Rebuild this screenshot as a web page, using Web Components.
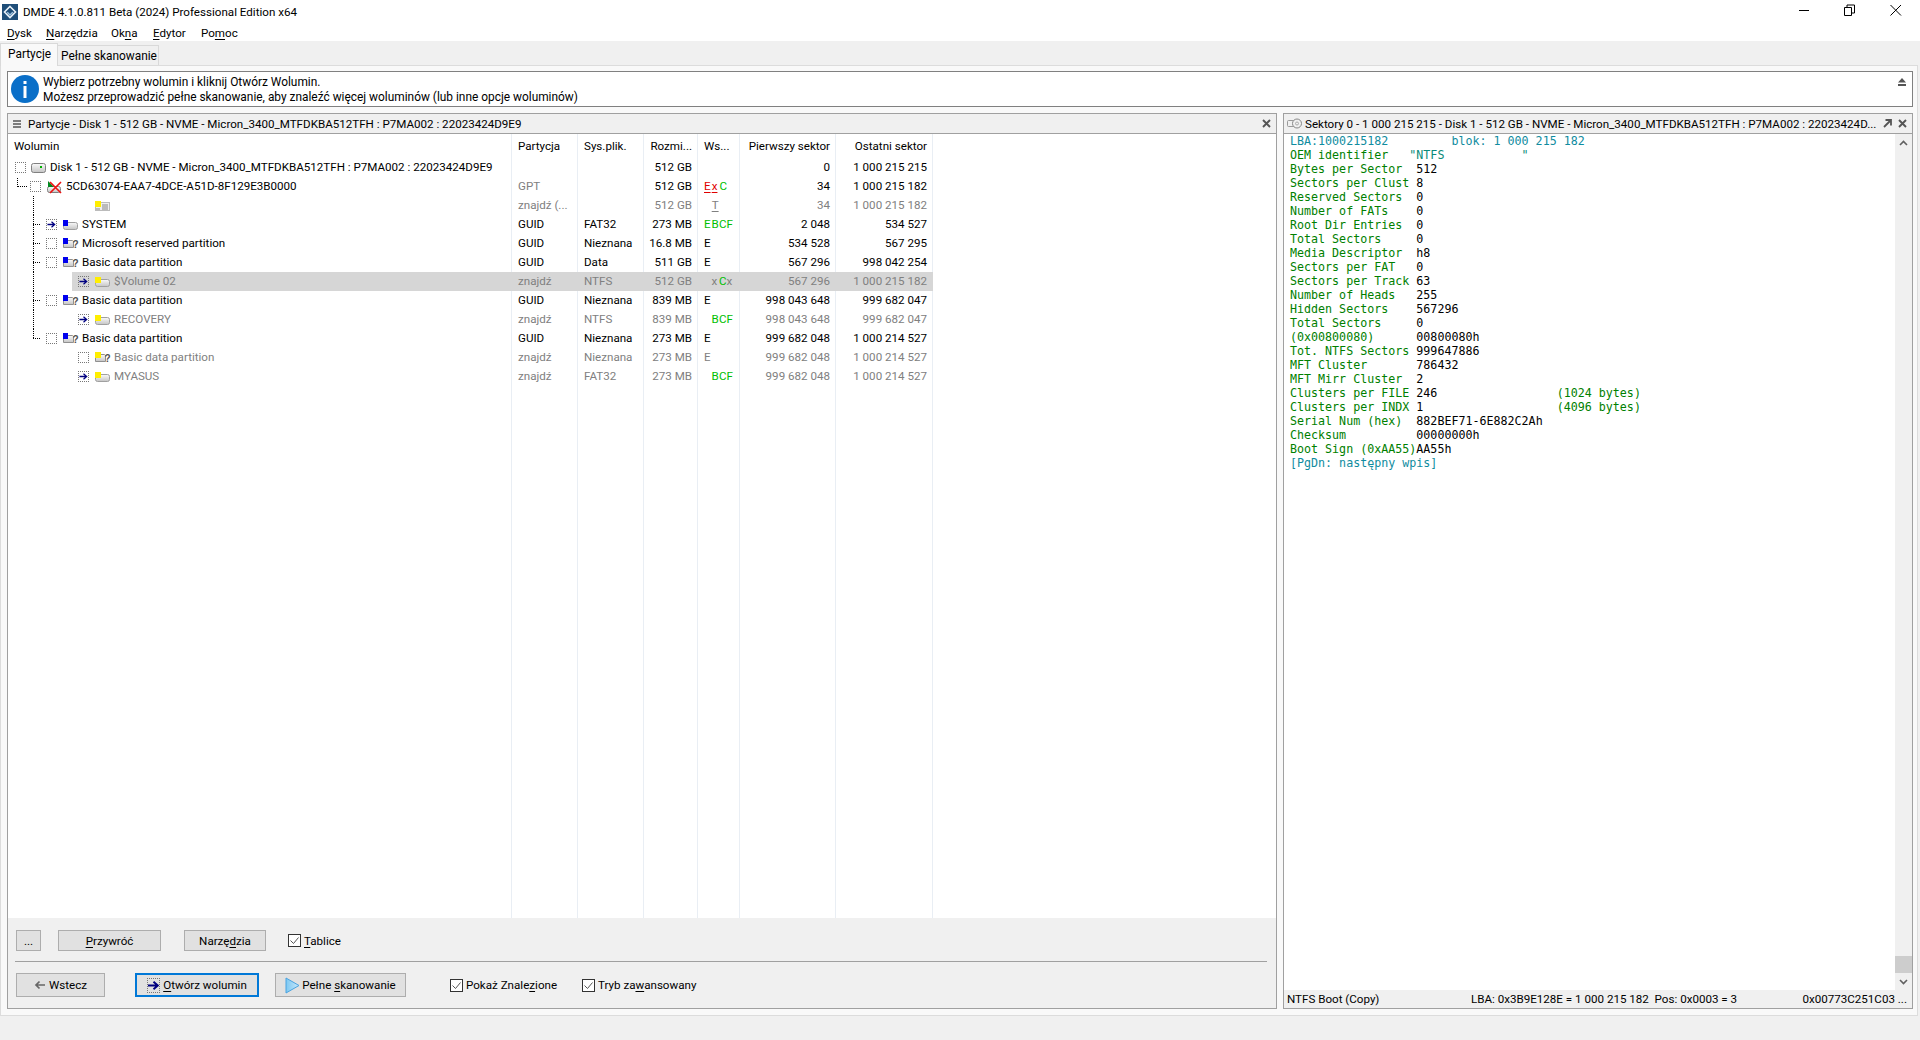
<!DOCTYPE html>
<html lang="pl">
<head>
<meta charset="utf-8">
<title>DMDE</title>
<style>
  html, body { margin: 0; height: 100%; background: #f0f0f0; }
  body { font: 11.6px Roboto, "Noto Sans", sans-serif; color: #000; overflow: hidden; }
  u { text-underline-offset: 2px; }
</style>
</head>
<body>
<dm-window>
  <dm-titlebar caption="DMDE 4.1.0.811 Beta (2024) Professional Edition x64"></dm-titlebar>
  <dm-menubar>
    <span style="width:39px"><u>D</u>ysk</span>
    <span style="width:65px"><u>N</u>arzędzia</span>
    <span style="width:42px">Ok<u>n</u>a</span>
    <span style="width:48px"><u>E</u>dytor</span>
    <span>Po<u>m</u>oc</span>
  </dm-menubar>
  <dm-tabs>
    <dm-tab active>Partycje</dm-tab>
    <dm-tab>Pełne skanowanie</dm-tab>
  </dm-tabs>
  <dm-page>
    <dm-info>
      <div>Wybierz potrzebny wolumin i kliknij Otwórz Wolumin.</div>
      <div>Możesz przeprowadzić pełne skanowanie, aby znaleźć więcej woluminów (lub inne opcje woluminów)</div>
    </dm-info>
    <dm-split>
      <dm-panel icon="menu" caption="Partycje - Disk 1 - 512 GB - NVME - Micron_3400_MTFDKBA512TFH : P7MA002 : 22023424D9E9">
        <dm-table>
          <dm-row indent="7" icon="disk" name="Disk 1 - 512 GB - NVME - Micron_3400_MTFDKBA512TFH : P7MA002 : 22023424D9E9" size="512 GB" first="0" last="1 000 215 215"></dm-row>
          <dm-row indent="22" guide="elbow" icon="bad" name="5CD63074-EAA7-4DCE-A51D-8F129E3B0000" part="GPT" dimpart size="512 GB" flags="rE rx gC" first="34" last="1 000 215 182"></dm-row>
          <dm-row indent="70" guide="pass" nocheck icon="card" dim part="znajdź (..." size="512 GB" flags="- uT" first="34" last="1 000 215 182"></dm-row>
          <dm-row indent="38" guide="tick" arrow icon="blue" name="SYSTEM" part="GUID" fs="FAT32" size="273 MB" flags="gE gB gC gF" first="2 048" last="534 527"></dm-row>
          <dm-row indent="38" guide="tick" icon="blueq" name="Microsoft reserved partition" part="GUID" fs="Nieznana" size="16.8 MB" flags="kE" first="534 528" last="567 295"></dm-row>
          <dm-row indent="38" guide="tick" icon="blueq" name="Basic data partition" part="GUID" fs="Data" size="511 GB" flags="kE" first="567 296" last="998 042 254"></dm-row>
          <dm-row indent="70" guide="pass" selected dim arrow icon="yellow" name="$Volume 02" part="znajdź" fs="NTFS" size="512 GB" flags="- dx gC dx" first="567 296" last="1 000 215 182"></dm-row>
          <dm-row indent="38" guide="tick" icon="blueq" name="Basic data partition" part="GUID" fs="Nieznana" size="839 MB" flags="kE" first="998 043 648" last="999 682 047"></dm-row>
          <dm-row indent="70" guide="pass" dim arrow icon="yellow" name="RECOVERY" part="znajdź" fs="NTFS" size="839 MB" flags="- gB gC gF" first="998 043 648" last="999 682 047"></dm-row>
          <dm-row indent="38" guide="end" icon="blueq" name="Basic data partition" part="GUID" fs="Nieznana" size="273 MB" flags="kE" first="999 682 048" last="1 000 214 527"></dm-row>
          <dm-row indent="70" dim icon="yellowq" name="Basic data partition" part="znajdź" fs="Nieznana" size="273 MB" flags="dE" first="999 682 048" last="1 000 214 527"></dm-row>
          <dm-row indent="70" dim arrow icon="yellow" name="MYASUS" part="znajdź" fs="FAT32" size="273 MB" flags="- gB gC gF" first="999 682 048" last="1 000 214 527"></dm-row>
        </dm-table>
        <dm-actions>
          <div slot="top">
            <dm-button style="width:25px">...</dm-button>
            <dm-button style="width:103px;margin-left:17px"><u>P</u>rzywróć</dm-button>
            <dm-button style="width:82px;margin-left:23px">Narzę<u>d</u>zia</dm-button>
            <dm-check style="margin-left:22px"><u>T</u>ablice</dm-check>
          </div>
          <div slot="bottom">
            <dm-button kind="back" style="width:89px">Wstecz</dm-button>
            <dm-button kind="open" primary style="width:124px;margin-left:30px"><u>O</u>twórz wolumin</dm-button>
            <dm-button kind="play" style="width:131px;margin-left:16px">Pełne <u>s</u>kanowanie</dm-button>
            <dm-check style="margin-left:44px;width:132px">Pokaż Znale<u>z</u>ione</dm-check>
            <dm-check>Tryb za<u>w</u>ansowany</dm-check>
          </div>
        </dm-actions>
      </dm-panel>
      <dm-panel icon="sectors" expand caption="Sektory 0 - 1 000 215 215 - Disk 1 - 512 GB - NVME - Micron_3400_MTFDKBA512TFH : P7MA002 : 22023424D...">
        <dm-sectors></dm-sectors>
        <dm-status>
          <span style="width:184px">NTFS Boot (Copy)</span>
          <span style="flex:1">LBA: 0x3B9E128E = 1 000 215 182&nbsp;&nbsp;Pos: 0x0003 = 3</span>
          <span>0x00773C251C03 ...</span>
        </dm-status>
      </dm-panel>
    </dm-split>
  </dm-page>
  <dm-footer></dm-footer>
</dm-window>

<script>
(function () {

  // small helper, every element below has the same constructor body otherwise
  function shadow(el, html) {
    el.attachShadow({ mode: 'open' });
    el.shadowRoot.innerHTML = html;
  }

  const shade = '<defs><linearGradient id="dr" x1="0" x2="0" y1="0" y2="1"><stop offset="0" stop-color="#fafafa"/><stop offset="1" stop-color="#c4c4c4"/></linearGradient></defs>';
  const driveBody = shade + '<rect x=".5" y="2.500" width="14" height="7" rx="2" fill="url(#dr)" stroke="#a0a0a0"/>';
  const driveShort = shade + '<path d="M.5 9.500v-6l1-1h8l1 1v6z" fill="url(#dr)" stroke="#909090"/>';
  const mark = '<text x="9.500" y="10" font-family="Liberation Sans" font-weight="700" font-size="10" fill="#505050">?</text>';

  function icon(name) {
    const svg = (w, h, body) => '<svg width="' + w + '" height="' + h + '" viewBox="0 0 ' + w + ' ' + h + '">' + body + '</svg>';
    switch (name) {
      case 'disk':
        return svg(15, 10, shade + '<rect x=".5" y=".5" width="14" height="9" rx="2" fill="url(#dr)" stroke="#808080"/><rect x="9" y="3" width="2" height="2" fill="#00b000"/>');
      case 'bad':
        return svg(16, 14, shade + '<rect x=".5" y="6.500" width="13" height="6" rx="2" fill="url(#dr)" stroke="#808080"/><path d="M1 1l6 6H1z" fill="#008a20"/><path d="M3 2l11 11M14 2L3 13" stroke="#ee1111" stroke-width="1.600"/>');
      case 'card':
        return svg(15, 10, '<rect x=".5" y="1.500" width="14" height="8" fill="#eee" stroke="#bbb"/><path d="M7 4h6M7 6h6M7 8h6" stroke="#888"/><rect x="0" y="0" width="6" height="6" fill="#ffee00"/><path d="M1 8h4" stroke="#888"/>');
      case 'blue':
        return svg(15, 10, driveBody + '<rect width="5" height="6" fill="#0000ee"/>');
      case 'yellow':
        return svg(15, 10, driveBody + '<rect width="6" height="6" fill="#ffee00"/>');
      case 'blueq':
        return svg(16, 11, driveShort + '<rect width="5" height="6" fill="#0000ee"/>' + mark);
      case 'yellowq':
        return svg(16, 11, driveShort + '<rect width="6" height="6" fill="#ffee00"/>' + mark);
      case 'menu':
        return svg(8, 8, '<path d="M0 1h8M0 4h8M0 7h8" stroke="#555" stroke-width="1.400"/>');
      case 'sectors':
        return svg(15, 11, '<rect x=".5" y="2.500" width="9" height="6" rx="1" fill="none" stroke="#999"/><circle cx="10" cy="5.500" r="4.500" fill="#f0f0f0" stroke="#888"/><circle cx="10" cy="5.500" r="1.500" fill="none" stroke="#aaa"/>');
      default:
        return '';
    }
  }

  const arrowPath = '<path d="M0 5h7M4.500 2l3.500 3-3.500 3" fill="none" stroke="#000080" stroke-width="1.400"/>';

  class DmWindow extends HTMLElement {
    constructor() {
      super();
      shadow(this, '<style>:host { display: flex; flex-direction: column; height: 100vh; }</style><slot></slot>');
    }
  }

  class DmTitlebar extends HTMLElement {
    connectedCallback() {
      if (this.shadowRoot) return;
      shadow(this, `<style>
        :host { display: flex; align-items: center; height: 24px; background: #fff; flex: none; }
        .logo { margin-left: 2px; margin-right: 5px; display: block; }
        .t { flex: 1; white-space: nowrap; }
        .w { display: flex; }
        .w svg { display: block; margin-bottom: 8px; }
      </style>
      <svg class="logo" width="16" height="16" viewBox="0 0 16 16">
        <rect width="16" height="16" fill="#1f4e79"/>
        <path d="M8 2.500L13.500 8 8 13.500 2.500 8z" fill="none" stroke="#e8f0f8" stroke-width="1.600"/>
        <path d="M5.500 8L8 5.500 10.500 8" fill="none" stroke="#1f4e79" stroke-width="1.600"/>
        <path d="M5.200 8.200L8 11l2.800-2.800" fill="none" stroke="#9fc3e0" stroke-width="1.400"/>
      </svg>
      <span class="t"></span>
      <div class="w">
        <svg width="140" height="16" viewBox="0 0 140 16">
          <path d="M19 10.500h10" stroke="#000"/>
          <path d="M64.500 7.500h7v8h-7zM67 7.500v-2.500h7.500v8h-2.500" fill="none" stroke="#000"/>
          <path d="M110.500 5l10.500 10.500M121 5l-10.500 10.500" stroke="#000"/>
        </svg>
      </div>`);
      this.shadowRoot.querySelector('.t').textContent = this.getAttribute('caption');
    }
  }

  class DmMenubar extends HTMLElement {
    constructor() {
      super();
      shadow(this, `<style>
        :host { display: flex; align-items: center; height: 17px; padding-left: 7px; background: #fff; flex: none; }
        ::slotted(span) { display: block; white-space: nowrap; }
      </style><slot></slot>`);
    }
  }

  class DmTabs extends HTMLElement {
    constructor() {
      super();
      shadow(this, `<style>
        :host { display: flex; align-items: flex-start; height: 24px; padding-top: 2px; box-sizing: border-box; background: #f0f0f0; flex: none; }
      </style><slot></slot>`);
    }
  }

  class DmTab extends HTMLElement {
    constructor() {
      super();
      shadow(this, `<style>
        :host { display: flex; align-items: center; box-sizing: border-box; width: 101px; height: 20px; margin-top: 2px; padding-left: 3px;
                background: #f0f0f0; border: 1px solid #d9d9d9; border-bottom: 0; border-left: 0; white-space: nowrap; font-size: 11.9px; }
        :host([active]) { width: 58px; height: 23px; margin-top: 0; padding-left: 7px; padding-bottom: 2px; background: #f9f9f9; border-left: 1px solid #d9d9d9; position: relative; }
      </style><slot></slot>`);
    }
  }

  class DmPage extends HTMLElement {
    constructor() {
      super();
      shadow(this, `<style>
        :host { display: flex; flex-direction: column; gap: 6px; flex: none; height: 951px; box-sizing: border-box;
                width: 1918px; padding: 5px 4px 6px 6px; background: #f9f9f9; border: 1px solid #dcdcdc; }
      </style><slot></slot>`);
    }
  }

  class DmInfo extends HTMLElement {
    constructor() {
      super();
      shadow(this, `<style>
        :host { display: flex; align-items: center; height: 36px; box-sizing: border-box; flex: none;
                background: #fff; border: 1px solid #808080; line-height: 15px; font-size: 11.9px; }
        svg.i { margin: 0 4px 0 3px; display: block; }
        .txt { flex: 1; white-space: nowrap; padding-top: 2px; }
        svg.e { margin: 0 6px 0 0; align-self: flex-start; margin-top: 6px; }
      </style>
      <svg class="i" width="28" height="28" viewBox="0 0 28 28">
        <circle cx="14" cy="14" r="14" fill="#0a6fc8"/>
        <rect x="12.500" y="6" width="3" height="3" fill="#fff"/>
        <rect x="12.500" y="11" width="3" height="12" fill="#fff"/>
      </svg>
      <div class="txt"><slot></slot></div>
      <svg class="e" width="8" height="8" viewBox="0 0 8 8"><path d="M4 0l4 4.500H0z M0 6h8v2H0z" fill="#555"/></svg>`);
    }
  }

  class DmSplit extends HTMLElement {
    constructor() {
      super();
      shadow(this, `<style>
        :host { display: grid; grid-template-columns: 1270px 630px; gap: 6px; flex: 1; min-height: 0; }
      </style><slot></slot>`);
    }
  }

  class DmPanel extends HTMLElement {
    connectedCallback() {
      if (this.shadowRoot) return;
      const expand = this.hasAttribute('expand');
      shadow(this, `<style>
        :host { display: flex; flex-direction: column; box-sizing: border-box; border: 1px solid #a0a0a0; background: #fff; min-height: 0; min-width: 0; }
        header { display: flex; align-items: center; height: 19px; flex: none; background: #f0f0f0; border-bottom: 1px solid #a0a0a0; padding: 0 5px; gap: 5px; }
        .c { flex: 1; white-space: nowrap; overflow: hidden; margin-left: ${expand ? -2 : 2}px; }
        header svg { display: block; flex: none; }
        header svg:first-child { margin-left: ${expand ? -2 : 0}px; }
      </style>
      <header>
        ${icon(this.getAttribute('icon'))}
        <span class="c"></span>
        ${expand ? '<svg width="9" height="9" viewBox="0 0 9 9" style="margin-right:1px"><path d="M1 8l6-6M2.500 1H8v5.500" fill="none" stroke="#555" stroke-width="1.800"/></svg>' : ''}
        <svg width="9" height="9" viewBox="0 0 9 9"><path d="M1 1l7 7M8 1L1 8" stroke="#555" stroke-width="1.900"/></svg>
      </header>
      <slot></slot>`);
      this.shadowRoot.querySelector('.c').textContent = this.getAttribute('caption');
    }
  }

  const columns = '504px 66px 66px 54px 42px 96px 97px';
  const lineColor = '#e9eef4';

  class DmTable extends HTMLElement {
    constructor() {
      super();
      const heads = ['Wolumin', 'Partycja', 'Sys.plik.', 'Rozmi...', 'Ws...', 'Pierwszy sektor', 'Ostatni sektor'];
      const cls = ['', '', '', 'r', '', 'r', 'r'];
      shadow(this, `<style>
        :host { display: flex; flex-direction: column; flex: 1; min-height: 0; background: #fff; }
        .grid { display: grid; grid-template-columns: ${columns}; width: max-content; }
        .head { height: 24px; flex: none; }
        .head div { display: flex; align-items: center; padding: 0 5px 1px 6px; border-right: 1px solid ${lineColor}; box-sizing: border-box; white-space: nowrap; }
        .head div.r { justify-content: flex-end; }
        .fill { flex: 1; }
        .fill div { border-right: 1px solid ${lineColor}; }
        ::slotted(dm-row) { flex: none; }
      </style>
      <div class="grid head">${heads.map((h, i) => '<div class="' + cls[i] + '">' + h + '</div>').join('')}</div>
      <slot></slot>
      <div class="grid fill">${heads.map(() => '<div></div>').join('')}</div>`);
    }
  }

  class DmRow extends HTMLElement {
    connectedCallback() {
      if (this.shadowRoot) return;
      const a = n => this.getAttribute(n) || '';
      const flags = a('flags').split(' ').filter(Boolean).map(f => {
        if (f === '-') return '<i></i>';
        const colors = { r: 'red u', g: 'green', k: 'black', d: 'gray', u: 'gray u' };
        return '<i class="' + colors[f[0]] + '">' + f[1] + '</i>';
      }).join('');
      let guide = '';
      switch (a('guide')) {
        case 'elbow': guide = '<b class="v" style="left:9px;top:1px;height:9px"></b><b class="h" style="left:9px;top:9px;width:10px"></b>'; break;
        case 'pass': guide = '<b class="v" style="left:25px;top:0;bottom:0"></b>'; break;
        case 'tick': guide = '<b class="v" style="left:25px;top:0;bottom:0"></b><b class="h" style="left:25px;top:9px;width:7px"></b>'; break;
        case 'end': guide = '<b class="v" style="left:25px;top:0;height:9px"></b><b class="h" style="left:25px;top:9px;width:7px"></b>'; break;
      }
      const indent = parseInt(a('indent'), 10);
      const selected = this.hasAttribute('selected');
      const box = this.hasAttribute('nocheck') ? '<span class="box none"></span>'
        : '<span class="box">' + (this.hasAttribute('arrow') ? '<svg width="9" height="9" viewBox="0 0 9 10">' + arrowPath + '</svg>' : '') + '</span>';
      shadow(this, `<style>
        :host { display: block; height: 19px; }
        :host([dim]) { color: #808080; }
        .row { display: grid; grid-template-columns: ${columns}; width: max-content; height: 19px; }
        .row > div { display: flex; align-items: center; padding: 0 5px 1px 6px; box-sizing: border-box; white-space: nowrap; overflow: hidden; border-right: 1px solid ${lineColor}; }
        .row > div.r { justify-content: flex-end; }
        .sel > div { background: #d6d6d6; border-right-color: #d6d6d6; }
        .row > div.name { position: relative; padding: 0; overflow: visible; background: none; }
        .inner { display: flex; align-items: center; height: 19px; flex: 1; padding-right: 5px; }
        .n { margin-bottom: 1px; }
        .sel .inner { background: #d6d6d6; }
        .box { width: 9px; height: 9px; border: 1px dotted #777; margin-right: ${indent === 7 ? 5 : 6}px; flex: none; display: flex; }
        .box.none { visibility: hidden; }
        .ic { width: 15px; flex: none; margin-right: 4px; display: flex; align-items: center; }
        .ic svg { display: block; flex: none; overflow: visible; }
        b { position: absolute; display: block; }
        b.v { border-left: 1px dotted #000; }
        b.h { border-top: 1px dotted #000; }
        i { display: inline-block; width: 7.7px; font-style: normal; text-align: left; }
        .red { color: #e00000; } .green { color: #00c000; } .black { color: #000; } .gray { color: #808080; }
        .u { text-decoration: underline; text-underline-offset: 2px; }
      </style>
      <div class="row ${selected ? 'sel' : ''}">
        <div class="name">
          ${guide}
          <div class="inner" style="margin-left:${selected ? indent - 6 : indent}px;padding-left:${selected ? 6 : 0}px">
            ${box}<span class="ic">${icon(a('icon'))}</span><span class="n"></span>
          </div>
        </div>
        <div class="p"></div>
        <div class="f"></div>
        <div class="r s"></div>
        <div class="flags">${flags}</div>
        <div class="r a"></div>
        <div class="r z"></div>
      </div>`);
      const root = this.shadowRoot;
      root.querySelector('.n').textContent = a('name');
      root.querySelector('.p').textContent = a('part');
      if (this.hasAttribute('dimpart')) root.querySelector('.p').style.color = '#808080';
      root.querySelector('.f').textContent = a('fs');
      root.querySelector('.s').textContent = a('size');
      root.querySelector('.a').textContent = a('first');
      root.querySelector('.z').textContent = a('last');
    }
  }

  class DmActions extends HTMLElement {
    constructor() {
      super();
      shadow(this, `<style>
        :host { display: flex; flex-direction: column; height: 90px; flex: none; box-sizing: border-box; background: #f0f0f0; padding: 12px 9px 0 8px; }
        .sep { height: 1px; background: #a0a0a0; margin: 10px 0 11px -1px; }
        ::slotted(div) { display: flex; align-items: center; }
        ::slotted([slot=top]) { height: 21px; }
        ::slotted([slot=bottom]) { height: 24px; }
      </style>
      <slot name="top"></slot><div class="sep"></div><slot name="bottom"></slot>`);
    }
  }

  class DmButton extends HTMLElement {
    connectedCallback() {
      if (this.shadowRoot) return;
      const glyphs = {
        back: '<svg width="11" height="10" viewBox="0 0 11 10" style="margin-right:2px"><path d="M11 5H2M5.500 1.500L2 5l3.500 3.500" fill="none" stroke="#666" stroke-width="1.700"/></svg>',
        open: '<span class="dots"><svg width="11" height="13" viewBox="0 0 9 10"><path d="M0 5h7M4.500 2l3.500 3-3.500 3" fill="none" stroke="#000080" stroke-width="1.600"/></svg></span>',
        play: '<svg width="15" height="17" viewBox="0 0 15 17"><defs><linearGradient id="p" x1="0" x2="1"><stop offset="0" stop-color="#7cc8f2"/><stop offset="1" stop-color="#c8e8fa"/></linearGradient></defs><path d="M1 1l13 7.500L1 16z" fill="url(#p)" stroke="#4aa3e0"/></svg>'
      };
      shadow(this, `<style>
        :host { display: flex; align-items: center; justify-content: center; gap: 2px; box-sizing: border-box; height: 100%; flex: none;
                background: #e1e1e1; border: 1px solid #adadad; white-space: nowrap; }
        :host([primary]) { border: 2px solid #0078d7; }
        svg { display: block; }
        .dots { border: 1px dotted #777; display: block; margin-right: 1px; }
      </style>${glyphs[this.getAttribute('kind')] || ''}<span><slot></slot></span>`);
    }
  }

  class DmCheck extends HTMLElement {
    constructor() {
      super();
      shadow(this, `<style>
        :host { display: flex; align-items: center; gap: 3px; white-space: nowrap; flex: none; }
        svg { display: block; }
      </style>
      <svg width="13" height="13" viewBox="0 0 13 13"><rect x=".5" y=".5" width="12" height="12" fill="#fff" stroke="#333"/><path d="M2.500 6.500l3 3 5-6" fill="none" stroke="#555"/></svg>
      <span><slot></slot></span>`);
    }
  }

  // [label, value, tail], padded to columns of the mono font, as in the program
  const bootLines = [
    ['Bytes per Sector', '512'],
    ['Sectors per Clust', '8'],
    ['Reserved Sectors', '0'],
    ['Number of FATs', '0'],
    ['Root Dir Entries', '0'],
    ['Total Sectors', '0'],
    ['Media Descriptor', 'h8'],
    ['Sectors per FAT', '0'],
    ['Sectors per Track', '63'],
    ['Number of Heads', '255'],
    ['Hidden Sectors', '567296'],
    ['Total Sectors', '0'],
    ['(0x00800080)', '00800080h'],
    ['Tot. NTFS Sectors', '999647886'],
    ['MFT Cluster', '786432'],
    ['MFT Mirr Cluster', '2'],
    ['Clusters per FILE', '246', '(1024 bytes)'],
    ['Clusters per INDX', '1', '(4096 bytes)'],
    ['Serial Num (hex)', '882BEF71-6E882C2Ah'],
    ['Checksum', '00000000h'],
    ['Boot Sign (0xAA55)', 'AA55h']
  ];

  class DmSectors extends HTMLElement {
    constructor() {
      super();
      const rows = bootLines.map(l => {
        const label = l[0].padEnd(18, ' ');
        const value = l[1];
        const tail = l[2] ? '<span class="g">' + ' '.repeat(20 - value.length) + l[2] + '</span>' : '';
        return '<div><span class="g">' + label + '</span><span class="k">' + value + '</span>' + tail + '</div>';
      }).join('');
      shadow(this, `<style>
        :host { display: flex; flex: 1; min-height: 0; background: #fff; }
        .text { flex: 1; padding: 0 0 0 6px; font: 11.67px/14px "DejaVu Sans Mono", "Liberation Mono", monospace; white-space: pre; }
        .g { color: #008000; } .k { color: #000; } .c { color: #108ca0; } .q { color: #0a8a78; }
        .bar { width: 17px; flex: none; display: flex; flex-direction: column; background: #f0f0f0; }
        .btn { height: 17px; display: flex; align-items: center; justify-content: center; }
        .sp { flex: 1; }
        .th { height: 17px; background: #cdcdcd; }
        svg { display: block; }
      </style>
      <div class="text"><div class="c">LBA:1000215182         blok: 1 000 215 182</div><div><span class="g">OEM identifier   </span><span class="q">"NTFS           "</span></div>${rows}<div class="c">[PgDn: następny wpis]</div></div>
      <div class="bar">
        <div class="btn"><svg width="9" height="6" viewBox="0 0 9 6"><path d="M1 5l3.500-3.500L8 5" fill="none" stroke="#606060" stroke-width="1.600"/></svg></div>
        <div class="sp"></div><div class="th"></div>
        <div class="btn"><svg width="9" height="6" viewBox="0 0 9 6"><path d="M1 1l3.500 3.500L8 1" fill="none" stroke="#606060" stroke-width="1.600"/></svg></div>
      </div>`);
    }
  }

  class DmStatus extends HTMLElement {
    constructor() {
      super();
      shadow(this, `<style>
        :host { display: flex; align-items: center; height: 18px; flex: none; background: #f0f0f0; padding: 0 5px 0 3px; white-space: nowrap; }
        ::slotted(span) { display: block; }
      </style><slot></slot>`);
    }
  }

  class DmFooter extends HTMLElement {
    constructor() {
      super();
      shadow(this, '<style>:host { display: block; flex: 1; background: #f0f0f0; }</style>');
    }
  }

  customElements.define('dm-window', DmWindow);
  customElements.define('dm-titlebar', DmTitlebar);
  customElements.define('dm-menubar', DmMenubar);
  customElements.define('dm-tabs', DmTabs);
  customElements.define('dm-tab', DmTab);
  customElements.define('dm-page', DmPage);
  customElements.define('dm-info', DmInfo);
  customElements.define('dm-split', DmSplit);
  customElements.define('dm-panel', DmPanel);
  customElements.define('dm-table', DmTable);
  customElements.define('dm-row', DmRow);
  customElements.define('dm-actions', DmActions);
  customElements.define('dm-button', DmButton);
  customElements.define('dm-check', DmCheck);
  customElements.define('dm-sectors', DmSectors);
  customElements.define('dm-status', DmStatus);
  customElements.define('dm-footer', DmFooter);

})();
</script>
</body>
</html>
